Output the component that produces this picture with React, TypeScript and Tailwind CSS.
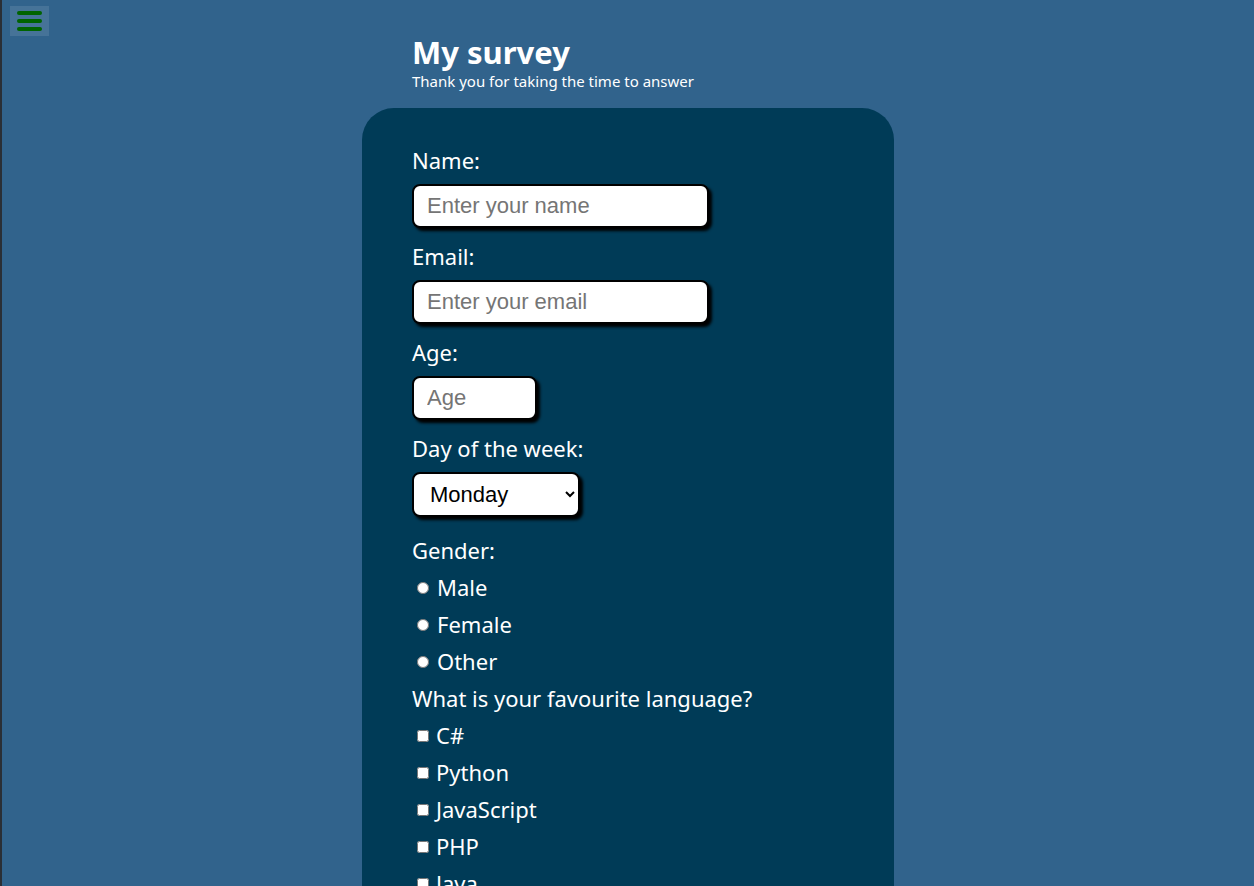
import React from 'react';

const font = { fontFamily: '"Noto Sans", "Open Sans", sans-serif' };

const TextField: React.FC<{ placeholder: string; width: string; type?: string }> = ({ placeholder, width, type = 'text' }) => (
  <input
    type={type}
    placeholder={placeholder}
    className={`${width} h-[44px] mt-[10px] mb-[14px] bg-white border-2 border-black rounded-lg px-[13px] text-[22px] text-black placeholder:text-[#757575] shadow-[3px_3px_3px_#000] font-['Liberation_Sans',Arial,sans-serif] outline-none`}
  />
);

const RadioRow: React.FC<{ label: string }> = ({ label }) => (
  <label className="h-[37px] flex items-center">
    <input type="radio" name="gender" className="w-[12px] h-[12px] ml-[5px] mr-[8px] accent-white" />
    <span>{label}</span>
  </label>
);

const CheckRow: React.FC<{ label: string }> = ({ label }) => (
  <label className="h-[37px] flex items-center">
    <input type="checkbox" className="w-[12px] h-[12px] ml-[5px] mr-[7px]" />
    <span>{label}</span>
  </label>
);

const App: React.FC = () => {
  return (
    <div className="min-h-screen bg-[#31638c] text-white border-l-2 border-[#2a2f36]" style={font}>
      <button className="absolute left-[10px] top-[6px] w-[39px] h-[30px] bg-white/10 flex flex-col items-center justify-center gap-[4px]">
        <span className="block w-[25px] h-[4px] rounded-full bg-[#006400]" />
        <span className="block w-[25px] h-[4px] rounded-full bg-[#006400]" />
        <span className="block w-[25px] h-[4px] rounded-full bg-[#006400]" />
      </button>

      <div className="w-[532px] mx-auto pt-[33px]">
        <header className="pl-[50px] mb-[17px]">
          <h1 className="text-[31px] font-bold leading-[38px]">My survey</h1>
          <p className="text-[15px] leading-[20px]">Thank you for taking the time to answer</p>
        </header>

        <form className="bg-[#003b57] rounded-t-[32px] rounded-b-[32px] pl-[50px] pr-[50px] pt-[38px] pb-[40px] text-[22px]">
          <div className="leading-[28px]">Name:</div>
          <TextField placeholder="Enter your name" width="w-[297px]" />

          <div className="leading-[28px]">Email:</div>
          <TextField placeholder="Enter your email" width="w-[297px]" type="email" />

          <div className="leading-[28px]">Age:</div>
          <TextField placeholder="Age" width="w-[125px]" type="number" />

          <div className="leading-[28px]">Day of the week:</div>
          <select className="w-[168px] h-[45px] mt-[10px] mb-[19px] bg-white border-2 border-black rounded-lg pl-[12px] pr-[6px] text-[22px] text-black shadow-[3px_3px_3px_#000] font-['Liberation_Sans',Arial,sans-serif] outline-none">
            <option>Monday</option>
            <option>Tuesday</option>
            <option>Wednesday</option>
            <option>Thursday</option>
            <option>Friday</option>
            <option>Saturday</option>
            <option>Sunday</option>
          </select>

          <div className="leading-[28px]">Gender:</div>
          <div className="mt-[5px]">
            <RadioRow label="Male" />
            <RadioRow label="Female" />
            <RadioRow label="Other" />
          </div>

          <div className="h-[37px] flex items-center">What is your favourite language?</div>
          <CheckRow label="C#" />
          <CheckRow label="Python" />
          <CheckRow label="JavaScript" />
          <CheckRow label="PHP" />
          <CheckRow label="Java" />

          <div className="h-[37px] flex items-center mt-[8px]">Comments:</div>
          <textarea className="w-[400px] h-[120px] mt-[10px] bg-white border-2 border-black rounded-lg p-[12px] text-[18px] text-black shadow-[3px_3px_3px_#000]" placeholder="Enter your comments" />

          <button type="submit" className="block mt-[24px] px-[24px] h-[44px] bg-white text-black rounded-lg border-2 border-black shadow-[3px_3px_3px_#000]">
            Submit
          </button>
        </form>
      </div>
    </div>
  );
};

export default App;
